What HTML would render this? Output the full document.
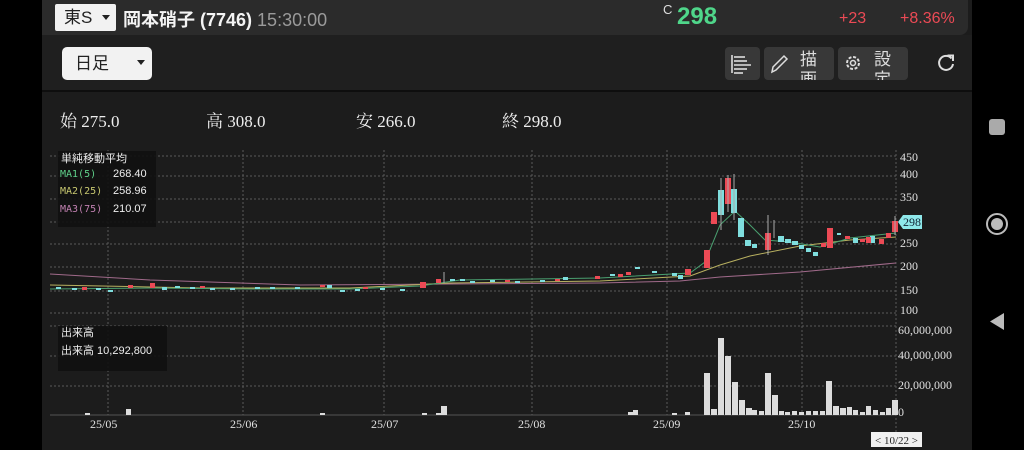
<!DOCTYPE html>
<html><head><meta charset="utf-8"><style>
*{margin:0;padding:0;box-sizing:border-box}
body{width:1024px;height:450px;background:#000;position:relative;overflow:hidden;font-family:"Liberation Sans","Noto Sans CJK JP",sans-serif;color:#eee}
.app{position:absolute;left:42px;top:0;width:930px;height:450px;background:#1c1c1c}
.hdr{position:absolute;left:0;top:0;width:926px;height:35px;background:#2b2b2b;border-bottom-right-radius:8px}
.tb{position:absolute;left:0;top:35px;width:930px;height:57px;background:#1f1f1f;border-bottom:2px solid #0e0e0e}
.sel{position:absolute;background:#f2f2f2;color:#222;border-radius:2px}
.btn{position:absolute;top:47px;height:33px;background:#383838;border-radius:4px}
.serif{font-family:"Liberation Serif","Noto Serif CJK SC",serif}
</style></head><body>
<div class="app">
 <div class="hdr">
  <div class="sel" style="left:13px;top:4px;width:61px;height:27px;font-size:17px;line-height:27px;padding-left:9px">東S<span style="position:absolute;right:6px;top:11px;border:4px solid transparent;border-top:5px solid #222"></span></div>
  <div style="position:absolute;left:81px;top:6px;font-size:18px;font-weight:bold;color:#f4f4f4">岡本硝子 (7746) <span style="font-weight:normal;color:#9a9a9a">15:30:00</span></div>
  <div style="position:absolute;left:621px;top:2px;font-size:13px;color:#ddd">C</div>
  <div style="position:absolute;left:635px;top:3px;font-size:24px;font-weight:bold;color:#4fd68a">298</div>
  <div style="position:absolute;left:797px;top:10px;font-size:16px;color:#ec4a55">+23</div>
  <div style="position:absolute;left:858px;top:10px;font-size:16px;color:#ec4a55">+8.36%</div>
 </div>
 <div class="tb">
  <div class="sel" style="left:20px;top:12px;width:90px;height:33px;border-radius:5px;font-size:17px;line-height:33px;padding-left:13px">日足<span style="position:absolute;right:7px;top:13px;border:4px solid transparent;border-top:5px solid #222"></span></div>
 </div>
 <div class="btn" style="left:683px;width:35px"><svg width="35" height="33"><g stroke="#ddd" stroke-width="1.6"><line x1="7" y1="8" x2="7" y2="26"/><line x1="9" y1="10" x2="20" y2="10"/><line x1="9" y1="14" x2="22" y2="14"/><line x1="9" y1="18" x2="26" y2="18"/><line x1="9" y1="22" x2="22" y2="22"/><line x1="9" y1="26" x2="18" y2="26"/></g></svg></div>
 <div class="btn" style="left:722px;width:70px;overflow:hidden"><svg width="30" height="33" style="position:absolute;left:0"><path d="M8 25 L9 20 L20 9 L23 12 L12 23 Z" fill="none" stroke="#ddd" stroke-width="1.5"/></svg><span style="position:absolute;left:36px;top:3px;font-size:17px;color:#ddd;line-height:20px">描<br>画</span></div>
 <div class="btn" style="left:796px;width:70px;overflow:hidden"><svg width="30" height="33" style="position:absolute;left:0"><circle cx="15" cy="16" r="6" fill="none" stroke="#ddd" stroke-width="2" stroke-dasharray="3 1.7"/><circle cx="15" cy="16" r="2.5" fill="none" stroke="#ddd" stroke-width="1.5"/></svg><span style="position:absolute;left:36px;top:3px;font-size:17px;color:#ddd;line-height:20px">設<br>定</span></div>
 <svg style="position:absolute;left:893px;top:52px" width="22" height="22"><path d="M16.5 6.5 A7 7 0 1 0 18 12" fill="none" stroke="#ddd" stroke-width="2"/><path d="M12.5 3.5 L18 3.5 L18 9" fill="none" stroke="#ddd" stroke-width="2"/></svg>

 <div class="serif" style="position:absolute;top:107px;left:18px;font-size:17px;color:#eee;white-space:nowrap">
  <span style="position:absolute;left:0">始 275.0</span><span style="position:absolute;left:146px">高 308.0</span><span style="position:absolute;left:296px">安 266.0</span><span style="position:absolute;left:442px">終 298.0</span>
 </div>
</div>

<svg style="position:absolute;left:0;top:0" width="1024" height="450">
 <g stroke="#5a5a5a" stroke-width="1" stroke-dasharray="2 2">
  <line x1="50" y1="156" x2="896" y2="156"/><line x1="50" y1="176" x2="896" y2="176"/><line x1="50" y1="199" x2="896" y2="199"/><line x1="50" y1="222" x2="896" y2="222"/><line x1="50" y1="244" x2="896" y2="244"/><line x1="50" y1="267" x2="896" y2="267"/><line x1="50" y1="291" x2="896" y2="291"/><line x1="50" y1="313" x2="896" y2="313"/>
  <line x1="50" y1="326" x2="896" y2="326"/><line x1="50" y1="356" x2="896" y2="356"/><line x1="50" y1="386" x2="896" y2="386"/>
  <line x1="108" y1="150" x2="108" y2="415"/><line x1="243" y1="150" x2="243" y2="415"/><line x1="384" y1="150" x2="384" y2="415"/><line x1="532" y1="150" x2="532" y2="415"/><line x1="667" y1="150" x2="667" y2="415"/><line x1="802" y1="150" x2="802" y2="415"/><line x1="896" y1="150" x2="896" y2="440"/>
 </g>
 <line x1="50" y1="415" x2="896" y2="415" stroke="#555"/>
 <polyline fill="none" stroke="#a06a8a" stroke-width="1" points="50,274 150,280 300,285 450,284 600,283 680,281 720,277 800,272 896,263"/>
 <polyline fill="none" stroke="#b8b060" stroke-width="1" points="50,285 200,288 350,288 450,283 600,281 690,276 720,265 750,256 800,246 850,240 896,237"/>
 <polyline fill="none" stroke="#4aa070" stroke-width="1" points="50,289 150,288 250,289 350,289 420,286 460,280 600,278 690,273 705,262 720,225 735,211 750,225 765,240 790,242 820,247 850,238 896,233"/>
 <g fill="#7fdede">
  <rect x="56" y="287" width="5" height="2"/><rect x="72" y="288" width="5" height="2"/><rect x="96" y="288" width="5" height="2"/><rect x="108" y="290" width="5" height="2"/><rect x="162" y="287" width="5" height="3"/><rect x="175" y="286" width="5" height="2"/><rect x="190" y="287" width="5" height="2"/><rect x="210" y="288" width="5" height="2"/><rect x="230" y="288" width="5" height="2"/><rect x="255" y="287" width="5" height="2"/><rect x="270" y="287" width="5" height="2"/><rect x="295" y="287" width="5" height="2"/><rect x="327" y="285" width="5" height="3"/><rect x="340" y="290" width="5" height="2"/><rect x="355" y="289" width="5" height="2"/><rect x="380" y="288" width="5" height="2"/><rect x="400" y="289" width="5" height="2"/><rect x="450" y="279" width="5" height="2"/><rect x="460" y="279" width="5" height="2"/><rect x="470" y="281" width="5" height="2"/><rect x="490" y="280" width="5" height="2"/><rect x="515" y="281" width="5" height="2"/><rect x="540" y="280" width="5" height="2"/><rect x="563" y="277" width="5" height="3"/><rect x="610" y="274" width="5" height="2"/><rect x="635" y="267" width="5" height="2"/><rect x="652" y="271" width="5" height="2"/><rect x="672" y="273" width="5" height="3"/><rect x="678" y="275" width="5" height="4"/><rect x="718" y="190" width="6" height="25"/><rect x="731" y="189" width="6" height="24"/><rect x="738" y="218" width="6" height="19"/><rect x="745" y="240" width="6" height="6"/><rect x="752" y="244" width="5" height="4"/><rect x="778" y="236" width="6" height="6"/><rect x="785" y="239" width="6" height="4"/><rect x="792" y="241" width="6" height="4"/><rect x="799" y="245" width="5" height="4"/><rect x="806" y="248" width="5" height="4"/><rect x="813" y="252" width="5" height="4"/><rect x="837" y="233" width="4" height="2"/><rect x="853" y="238" width="5" height="5"/><rect x="870" y="236" width="5" height="7"/>
 </g>
 <g fill="#ec4a55">
  <rect x="82" y="287" width="5" height="3"/><rect x="128" y="285" width="5" height="3"/><rect x="150" y="283" width="5" height="5"/><rect x="200" y="286" width="5" height="2"/><rect x="320" y="285" width="5" height="2"/><rect x="363" y="287" width="5" height="2"/><rect x="420" y="282" width="6" height="6"/><rect x="436" y="279" width="5" height="4"/><rect x="505" y="280" width="5" height="2"/><rect x="555" y="279" width="5" height="2"/><rect x="595" y="276" width="5" height="3"/><rect x="618" y="274" width="5" height="3"/><rect x="626" y="272" width="5" height="3"/><rect x="685" y="269" width="6" height="6"/><rect x="704" y="250" width="6" height="18"/><rect x="711" y="212" width="6" height="12"/><rect x="725" y="178" width="6" height="26"/><rect x="765" y="233" width="6" height="17"/><rect x="821" y="243" width="5" height="4"/><rect x="827" y="228" width="6" height="20"/><rect x="845" y="236" width="5" height="3"/><rect x="860" y="239" width="5" height="3"/><rect x="866" y="237" width="5" height="6"/><rect x="879" y="239" width="5" height="5"/><rect x="886" y="233" width="5" height="5"/><rect x="892" y="221" width="6" height="11"/>
 </g>
 <g stroke="#aaa" stroke-width="1">
  <line x1="721" y1="178" x2="721" y2="230"/><line x1="728" y1="175" x2="728" y2="212"/><line x1="734" y1="174" x2="734" y2="220"/><line x1="768" y1="215" x2="768" y2="255"/><line x1="774" y1="220" x2="774" y2="238"/><line x1="444" y1="272" x2="444" y2="283"/><line x1="895" y1="216" x2="895" y2="235"/>
 </g>
 <g fill="#dcdcdc">
  <rect x="85" y="413" width="5" height="2"/><rect x="126" y="409" width="5" height="6"/><rect x="320" y="413" width="5" height="2"/><rect x="422" y="413" width="5" height="2"/><rect x="436" y="413" width="5" height="2"/><rect x="441" y="406" width="6" height="9"/><rect x="628" y="412" width="5" height="3"/><rect x="633" y="410" width="5" height="5"/><rect x="672" y="413" width="5" height="2"/><rect x="685" y="412" width="5" height="3"/>
  <rect x="704" y="373" width="6" height="42"/><rect x="711" y="409" width="6" height="6"/><rect x="718" y="338" width="6" height="77"/><rect x="725" y="356" width="6" height="59"/><rect x="732" y="382" width="6" height="33"/><rect x="739" y="400" width="6" height="15"/><rect x="746" y="408" width="6" height="7"/><rect x="752" y="410" width="5" height="5"/><rect x="759" y="411" width="5" height="4"/><rect x="765" y="373" width="6" height="42"/><rect x="772" y="395" width="6" height="20"/><rect x="779" y="411" width="5" height="4"/><rect x="785" y="412" width="5" height="3"/><rect x="792" y="411" width="5" height="4"/><rect x="799" y="412" width="5" height="3"/><rect x="806" y="411" width="5" height="4"/><rect x="813" y="411" width="5" height="4"/><rect x="820" y="411" width="5" height="4"/><rect x="826" y="381" width="6" height="34"/><rect x="833" y="406" width="6" height="9"/><rect x="840" y="408" width="6" height="7"/><rect x="847" y="407" width="5" height="8"/><rect x="853" y="410" width="5" height="5"/><rect x="860" y="412" width="5" height="3"/><rect x="866" y="406" width="5" height="9"/><rect x="873" y="410" width="5" height="5"/><rect x="880" y="412" width="5" height="3"/><rect x="886" y="408" width="5" height="7"/><rect x="892" y="400" width="6" height="15"/>
 </g>
 <g font-family="Liberation Serif,serif" font-size="12" fill="#e0e0e0">
  <text x="900" y="161">450</text><text x="900" y="178">400</text><text x="900" y="201">350</text><text x="900" y="247">250</text><text x="900" y="270">200</text><text x="900" y="294">150</text><text x="900" y="314">100</text>
  <text x="898" y="334">60,000,000</text><text x="898" y="359">40,000,000</text><text x="898" y="389">20,000,000</text><text x="898" y="416">0</text>
  <text x="90" y="428">25/05</text><text x="230" y="428">25/06</text><text x="371" y="428">25/07</text><text x="518" y="428">25/08</text><text x="653" y="428">25/09</text><text x="788" y="428">25/10</text>
 </g>
 <path d="M898 222 L903 215 L922 215 L922 229 L903 229 Z" fill="#8ee8ea"/>
 <text x="903" y="226" font-family="Liberation Serif,serif" font-size="12" fill="#123">298</text>
 <rect x="871" y="432" width="51" height="15" fill="#f0f0f0"/>
 <text x="875" y="444" font-family="Liberation Serif,serif" font-size="11" fill="#222">&lt; 10/22 &gt;</text>
 <rect x="58" y="151" width="98" height="76" fill="#111" opacity="0.9"/>
 <text x="61" y="162" font-size="11" fill="#eee" font-family="Liberation Sans,Noto Sans CJK JP,sans-serif">単純移動平均</text>
 <g font-family="DejaVu Sans Mono,monospace" font-size="10">
  <text x="60" y="177" fill="#5fd08a">MA1(5)</text><text x="60" y="194" fill="#c8c870">MA2(25)</text><text x="60" y="212" fill="#c080b0">MA3(75)</text>
 </g>
 <g font-family="Liberation Sans,sans-serif" font-size="11" fill="#eee"><text x="113" y="177">268.40</text><text x="113" y="194">258.96</text><text x="113" y="212">210.07</text></g>
 <rect x="58" y="326" width="109" height="45" fill="#111" opacity="0.9"/>
 <text x="61" y="336" font-size="11" fill="#eee" font-family="Liberation Sans,Noto Sans CJK JP,sans-serif">出来高</text>
 <text x="61" y="354" font-size="11" fill="#eee" font-family="Liberation Sans,Noto Sans CJK JP,sans-serif">出来高  10,292,800</text>
 <rect x="989" y="119" width="16" height="16" rx="3" fill="#aaa"/>
 <circle cx="997" cy="224" r="10" fill="none" stroke="#bbb" stroke-width="2"/><circle cx="997" cy="224" r="6" fill="#bbb"/>
 <path d="M1004 313 L1004 330 L990 321.5 Z" fill="#bbb"/>
</svg>
</body></html>
